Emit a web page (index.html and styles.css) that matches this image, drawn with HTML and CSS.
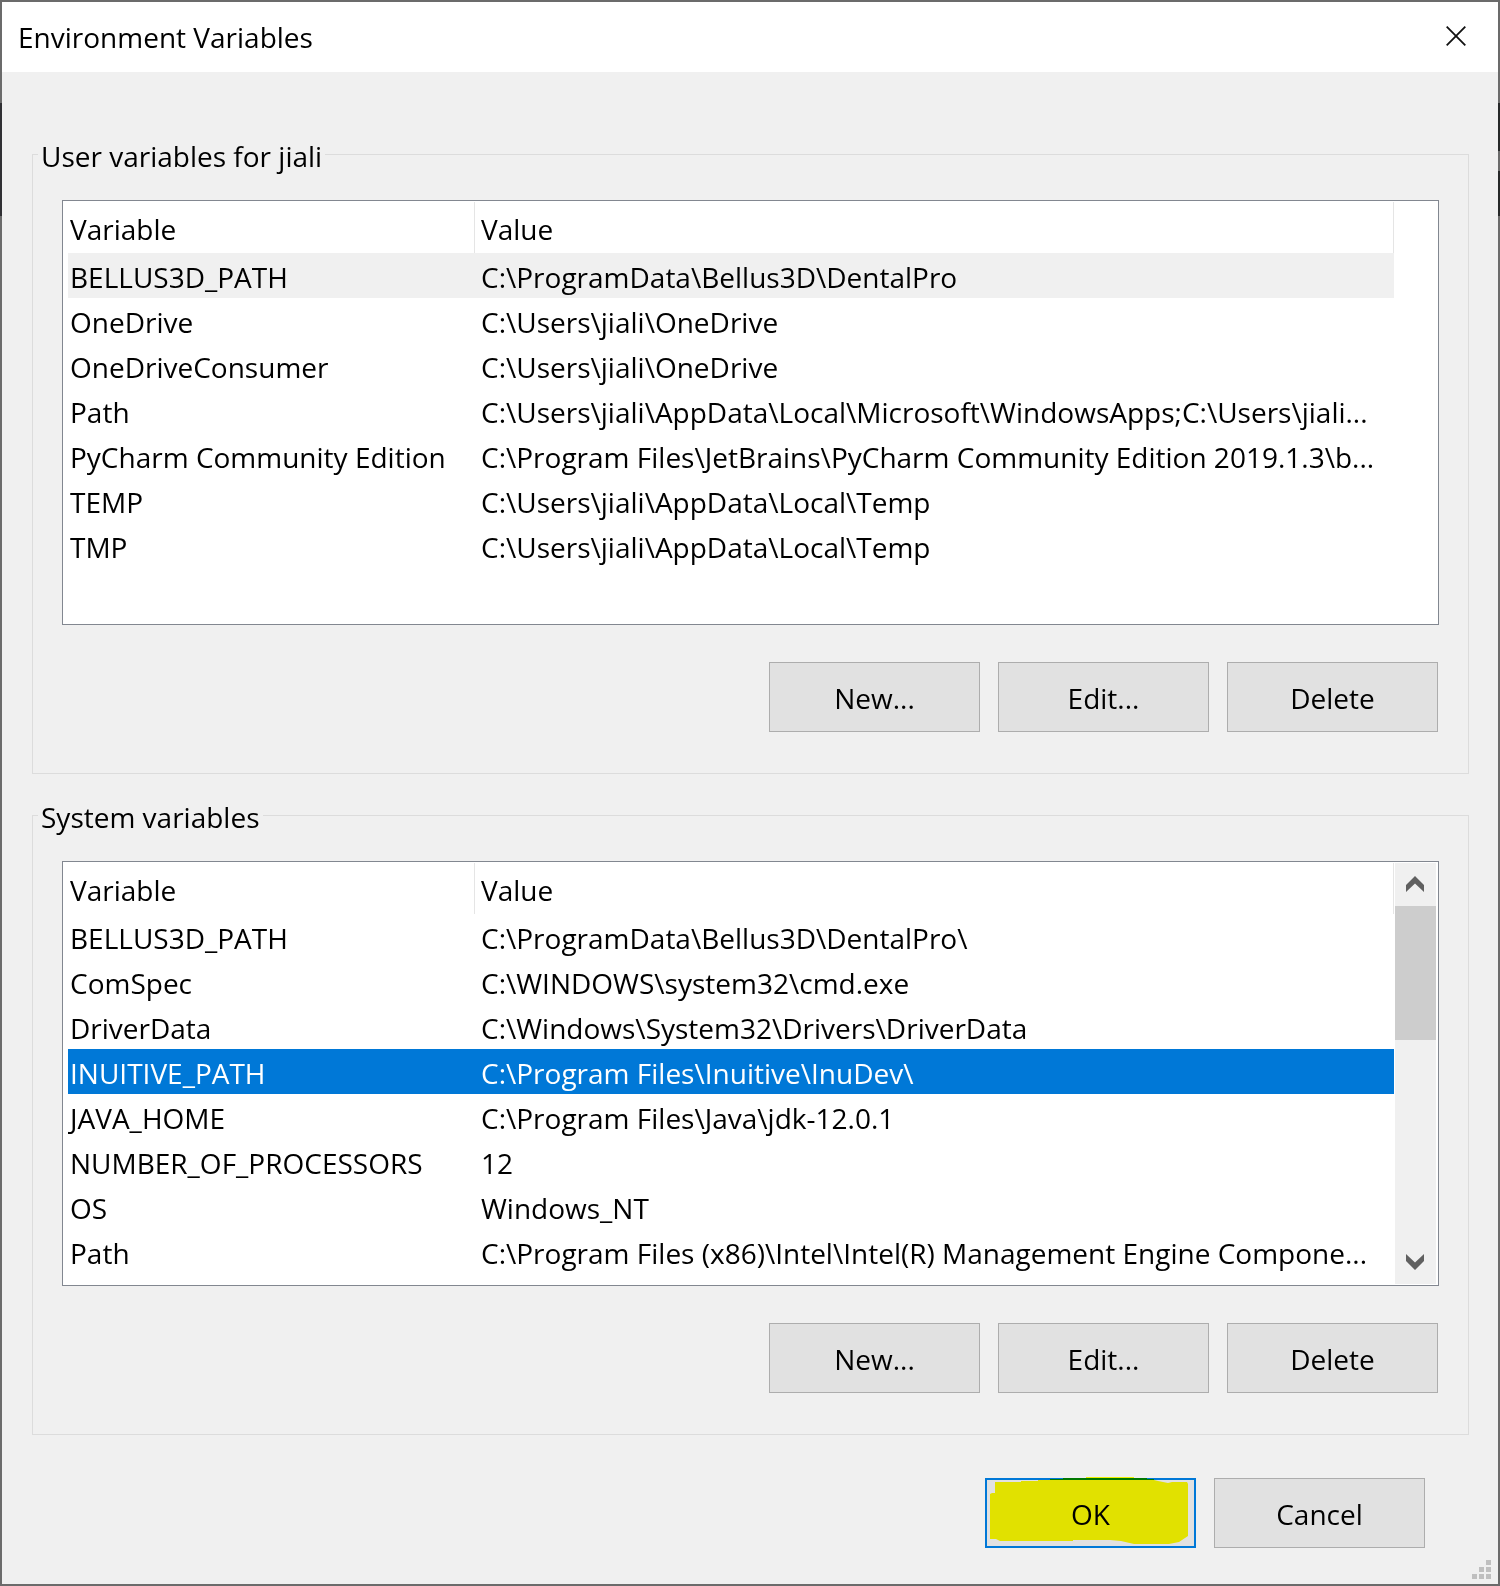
FILE: index.html
```html
<!DOCTYPE html>
<html lang="en">
<head>
<meta charset="utf-8">
<title>Environment Variables</title>
<meta name="viewport" content="width=device-width, initial-scale=1">
<link rel="stylesheet" href="styles.css">
</head>
<body>
<main class="dialog" role="dialog" aria-labelledby="dialog-title">
  <header class="titlebar">
    <h1 class="title" id="dialog-title">Environment Variables</h1>
    <button class="close" type="button" aria-label="Close">
      <svg width="20" height="20" viewBox="0 0 20 20" aria-hidden="true"><path d="M.7 .7 19.3 19.3M19.3 .7 .7 19.3" fill="none" stroke="#111" stroke-width="1.8"/></svg>
    </button>
  </header>
  <form class="content">
    <fieldset class="group">
      <legend class="legend">User variables for jiali</legend>
      <div class="group-body">
        <div class="list">
          <table class="vars">
            <thead><tr><th class="name" scope="col">Variable</th><th scope="col">Value</th></tr></thead>
            <tbody>
              <tr class="inactive"><td>BELLUS3D_PATH</td><td>C:\ProgramData\Bellus3D\DentalPro</td></tr>
              <tr><td>OneDrive</td><td>C:\Users\jiali\OneDrive</td></tr>
              <tr><td>OneDriveConsumer</td><td>C:\Users\jiali\OneDrive</td></tr>
              <tr><td>Path</td><td>C:\Users\jiali\AppData\Local\Microsoft\WindowsApps;C:\Users\jiali...</td></tr>
              <tr><td>PyCharm Community Edition</td><td>C:\Program Files\JetBrains\PyCharm Community Edition 2019.1.3\b...</td></tr>
              <tr><td>TEMP</td><td>C:\Users\jiali\AppData\Local\Temp</td></tr>
              <tr><td>TMP</td><td>C:\Users\jiali\AppData\Local\Temp</td></tr>
            </tbody>
          </table>
          <div class="rail"></div>
        </div>
        <div class="actions">
          <button class="btn" type="button">New...</button>
          <button class="btn" type="button">Edit...</button>
          <button class="btn" type="button">Delete</button>
        </div>
      </div>
    </fieldset>
    <fieldset class="group">
      <legend class="legend">System variables</legend>
      <div class="group-body">
        <div class="list">
          <table class="vars">
            <thead><tr><th class="name" scope="col">Variable</th><th scope="col">Value</th></tr></thead>
            <tbody>
              <tr><td>BELLUS3D_PATH</td><td>C:\ProgramData\Bellus3D\DentalPro\</td></tr>
              <tr><td>ComSpec</td><td>C:\WINDOWS\system32\cmd.exe</td></tr>
              <tr><td>DriverData</td><td>C:\Windows\System32\Drivers\DriverData</td></tr>
              <tr class="selected"><td>INUITIVE_PATH</td><td>C:\Program Files\Inuitive\InuDev\</td></tr>
              <tr><td>JAVA_HOME</td><td>C:\Program Files\Java\jdk-12.0.1</td></tr>
              <tr><td>NUMBER_OF_PROCESSORS</td><td>12</td></tr>
              <tr><td>OS</td><td>Windows_NT</td></tr>
              <tr><td>Path</td><td>C:\Program Files (x86)\Intel\Intel(R) Management Engine Compone...</td></tr>
            </tbody>
          </table>
          <div class="rail">
            <div class="scrollbar">
              <button class="arrow" type="button" aria-label="Scroll up">
                <svg width="18" height="16" viewBox="0 0 18 16" aria-hidden="true"><path d="M9 0 18 9V16L9 7.5 0 16V9Z" fill="#606060"/></svg>
              </button>
              <div class="track"><div class="thumb"></div></div>
              <button class="arrow" type="button" aria-label="Scroll down">
                <svg width="18" height="16" viewBox="0 0 18 16" aria-hidden="true"><path d="M9 16 18 7V0L9 8.5 0 0V7Z" fill="#606060"/></svg>
              </button>
            </div>
          </div>
        </div>
        <div class="actions">
          <button class="btn" type="button">New...</button>
          <button class="btn" type="button">Edit...</button>
          <button class="btn" type="button">Delete</button>
        </div>
      </div>
    </fieldset>
    <div class="footer">
      <div class="marked">
        <button class="btn default" type="submit">OK</button>
        <svg class="marker" width="211" height="70" viewBox="0 0 211 70" aria-hidden="true"><path d="M10 5H36V4H53V3H65V2H78V1H101V0H149V1H162V2H169V3L173 4 183 6 187 5H202L203 7V59L194 65 184 67H149L136 64 125 63H88V64H15L11 62H5V17L7 16H10Z" fill="#ff0"/></svg>
      </div>
      <button class="btn" type="button">Cancel</button>
    </div>
  </form>
  <svg class="grip" width="19" height="19" viewBox="0 0 19 19" aria-hidden="true"><path d="M14 0h5v5h-5zM7 7h5v5h-5zM14 7h5v5h-5zM0 14h5v5H0zM7 14h5v5H7zM14 14h5v5h-5z" fill="#bfbfbf"/></svg>
</main>
</body>
</html>
```
FILE: styles.css
```css
* {
  box-sizing: border-box;
}

/* the window edge is translucent: dark items behind it show at both sides */
body {
  margin: 0;
  min-height: 100vh;
  padding: 2px;
  display: flex;
  background:
    linear-gradient(#303034, #303034) left 103px / 2px 113px no-repeat,
    linear-gradient(#262829, #262829) right 103px / 2px 48px no-repeat,
    linear-gradient(#262829, #262829) right 171px / 2px 45px no-repeat,
    #6b6b6b;
  color: #000;
  font: 28px/40px "Open Sans", "Noto Sans", sans-serif;
}

button {
  font: inherit;
  color: inherit;
}

.dialog {
  position: relative;
  flex: 1;
  min-width: 0;
  background: #f0f0f0;
}

.titlebar {
  display: flex;
  align-items: center;
  justify-content: space-between;
  height: 70px;
  padding: 0 20px 0 16px;
  background: #fff;
}

.title {
  margin: 0;
  font-size: 28px;
  font-weight: 400;
}

.close {
  display: flex;
  padding: 11px 12px 13px;
  border: 0;
  background: none;
}

.content {
  display: flex;
  flex-direction: column;
  gap: 19px;
  padding: 60px 29px 36px 30px;
}

.group {
  min-width: 0;
  margin: 0;
  padding: 0 5px;
  border: 1px solid #dcdcdc;
}

.legend {
  padding: 4px 3px 0;
}

.group-body {
  padding: 24px 24px 41px;
}

.list {
  display: flex;
  min-height: 425px;
  padding: 1px 0 1px 5px;
  border: 1px solid #828790;
  background: #fff;
}

.vars {
  flex: 1;
  align-self: flex-start;
  width: 0;
  table-layout: fixed;
  border-collapse: separate;
  border-spacing: 0;
}

.vars th,
.vars td {
  height: 45px;
  padding: 2px 0 0 6px;
  overflow: hidden;
  font-weight: 400;
  text-align: left;
  white-space: nowrap;
}

.vars th {
  height: 51px;
  border-right: 1px solid #e5e5e5;
}

.vars th:first-child,
.vars td:first-child {
  padding-left: 2px;
}

.vars .name {
  width: 407px;
}

.inactive {
  background: #f0f0f0;
}

.selected {
  background: #0078d7;
  color: #fff;
}

.rail {
  display: flex;
  width: 44px;
  padding: 0 2px 0 1px;
}

.scrollbar {
  display: flex;
  flex: 1;
  flex-direction: column;
  background: #f0f0f0;
}

.arrow {
  display: flex;
  align-items: center;
  justify-content: center;
  height: 43px;
  padding: 0 2px 2px 0;
  border: 0;
  background: none;
}

.track {
  flex: 1;
}

.thumb {
  height: 134px;
  background: #cdcdcd;
}

.actions {
  display: flex;
  justify-content: flex-end;
  gap: 18px;
  padding: 37px 1px 0 0;
}

.btn {
  width: 211px;
  height: 70px;
  padding: 2px 0 0;
  border: 1px solid #adadad;
  background: #e1e1e1;
}

.default {
  border: 2px solid #0078d7;
}

.footer {
  display: flex;
  justify-content: flex-end;
  gap: 18px;
  padding: 24px 44px 0 0;
}

.marked {
  position: relative;
  display: flex;
}

/* highlighter stroke over the OK button */
.marker {
  position: absolute;
  left: 0;
  top: -1px;
  mix-blend-mode: multiply;
  pointer-events: none;
}

.grip {
  position: absolute;
  right: 7px;
  bottom: 5px;
}
```
